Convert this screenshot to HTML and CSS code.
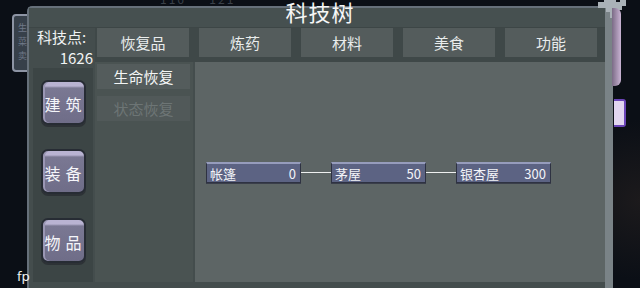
FILE: index.html
```html
<!DOCTYPE html>
<html lang="zh">
<head>
<meta charset="utf-8">
<link rel="stylesheet" href="styles.css">
</head>
<body>
<div class="stage">
  <div class="back-panel"><span>生</span><span>菜</span><span>卖</span></div>
  <div class="faint-top">116 · 121</div>
  <div class="window">
    <div class="titlebar"></div>
    <div class="main">
      <div class="leftcol">
        <div class="stats">
          <div class="stats-label">科技点:</div>
          <div class="stats-value">1626</div>
        </div>
        <div class="cats">
          <div class="cat"><span>建</span><span>筑</span></div>
          <div class="cat"><span>装</span><span>备</span></div>
          <div class="cat"><span>物</span><span>品</span></div>
        </div>
      </div>
      <div class="rightcol">
        <div class="tabs">
          <div class="tab">恢复品</div>
          <div class="tab">炼药</div>
          <div class="tab">材料</div>
          <div class="tab">美食</div>
          <div class="tab">功能</div>
        </div>
        <div class="body">
          <div class="sublist">
            <div class="sub active">生命恢复</div>
            <div class="sub dim">状态恢复</div>
          </div>
          <div class="content">
            <div class="chain">
              <div class="node"><span>帐篷</span><span>0</span></div>
              <div class="link"></div>
              <div class="node"><span>茅屋</span><span>50</span></div>
              <div class="link"></div>
              <div class="node"><span>银杏屋</span><span>300</span></div>
            </div>
          </div>
        </div>
      </div>
    </div>
  </div>
  <div class="title">科技树</div>
  <svg class="corner" width="30" height="20" viewBox="0 0 30 20">
    <path d="M8 0h12v4h4v-4h6v8h-4v4h-4v8h-8v-6h-4v-4h-8v-6h6z" fill="#aab2b8"/>
  </svg>
  <div class="side-bar"></div>
  <div class="side-tab"></div>
  <div class="fp">fp</div>
</div>
</body>
</html>
```

FILE: styles.css
```css
* { box-sizing: border-box; }
html, body { margin: 0; padding: 0; }
body {
  background: #0b0f16;
  font-family: "Noto Sans CJK SC", "Noto Sans", sans-serif;
  color: #eef0f0;
  overflow: hidden;
}
.stage {
  position: relative;
  width: 640px;
  height: 288px;
  overflow: hidden;
  padding: 6px 0 0 27px;
  background: radial-gradient(circle at 640px 200px, #1c1a1c 0, #0b0f16 80px);
}
.back-panel {
  position: absolute;
  left: 12px;
  top: 14px;
  width: 20px;
  height: 58px;
  border: 2px solid #8d94a4;
  border-radius: 4px;
  background: #37404a;
  display: flex;
  flex-direction: column;
  padding: 6px 0 0 4px;
  gap: 2px;
  font-size: 9px;
  line-height: 12px;
  color: #6f7888;
}
.faint-top {
  position: absolute;
  left: 160px;
  top: -10px;
  font-size: 12px;
  color: #3a4048;
  letter-spacing: 2px;
}
.window {
  position: relative;
  width: 586px;
  height: 292px;
  border: 2px solid #66707a;
  border-right: 8px solid #7a8387;
  border-radius: 5px 3px 0 0;
  background: #444d4d;
  display: flex;
  flex-direction: column;
}
.titlebar {
  height: 20px;
  background: #465050;
  border-bottom: 1px solid #3d4646;
}
.main {
  display: flex;
  flex: 1;
}
.leftcol {
  width: 66px;
  display: flex;
  flex-direction: column;
  padding-left: 4px;
}
.stats {
  height: 40px;
  font-size: 15px;
  line-height: 18px;
}
.stats-label { padding-left: 4px; color: #f1f3f3; }
.stats-value { text-align: right; padding-right: 2px; margin-top: 3px; color: #f1f3f3; }
.cats {
  width: 60px;
  height: 214px;
  background: #3c4545;
  display: flex;
  flex-direction: column;
  align-items: center;
  padding-top: 12px;
  gap: 24px;
}
.cat {
  width: 45px;
  height: 45px;
  border: 2px solid #272c34;
  border-radius: 7px;
  background: linear-gradient(#b9b3d2 0, #b9b3d2 4px, #7a7893 6px, #6f6d88 100%);
  box-shadow: inset 2px 0 0 #9a96b4, 0 2px 0 #2d3236;
  display: flex;
  align-items: center;
  justify-content: center;
  gap: 5px;
  font-size: 16px;
  color: #f5f5fa;
  padding-top: 2px;
}
.rightcol {
  flex: 1;
  display: flex;
  flex-direction: column;
}
.tabs {
  height: 34px;
  display: flex;
  gap: 10px;
  padding: 0 8px 5px 2px;
  background: #3f4848;
}
.tab {
  width: 92px;
  background: #545c5c;
  display: flex;
  align-items: center;
  justify-content: center;
  font-size: 15px;
  color: #e9ecec;
}
.body {
  flex: 1;
  display: flex;
}
.sublist {
  width: 98px;
  height: 220px;
  background: #4a5352;
  padding: 2px 3px 0 2px;
  display: flex;
  flex-direction: column;
  gap: 7px;
}
.sub {
  height: 25px;
  background: #545c5c;
  display: flex;
  align-items: center;
  justify-content: center;
  font-size: 15px;
}
.sub.active { color: #f3f5f5; }
.sub.dim { color: #6d7575; background: #515959; }
.content {
  width: 410px;
  height: 220px;
  margin-left: 2px;
  background: #5d6565;
  padding: 100px 0 0 11px;
}
.chain {
  display: flex;
  align-items: center;
}
.node {
  width: 95px;
  height: 21px;
  background: #5c6383;
  border: 1px solid #2e3242;
  border-top: 2px solid #969cbc;
  box-shadow: 0 1px 0 #3a3e4a;
  display: flex;
  align-items: center;
  justify-content: space-between;
  padding: 0 4px 0 3px;
  font-size: 13px;
  color: #f3f4f8;
}
.link {
  width: 30px;
  height: 1px;
  background: #eef0f0;
}
.title {
  position: absolute;
  left: 0;
  right: 0;
  top: -5px;
  text-align: center;
  font-size: 22px;
  color: #f6f7f7;
  letter-spacing: 1px;
}
.corner {
  position: absolute;
  left: 596px;
  top: -2px;
}
.side-bar {
  position: absolute;
  left: 612px;
  top: 8px;
  width: 9px;
  height: 78px;
  border-radius: 0 6px 6px 0;
  background: linear-gradient(90deg, #7b6b86, #c9b3d3);
}
.side-tab {
  position: absolute;
  left: 614px;
  top: 99px;
  width: 12px;
  height: 28px;
  background: #e2d6f0;
  border: 2px solid #6b45b8;
  border-left: 0;
  border-radius: 0 3px 3px 0;
}
.fp {
  position: absolute;
  left: 17px;
  top: 269px;
  font-family: "DejaVu Sans", sans-serif;
  font-size: 13px;
  color: #f2f2f2;
}
```
